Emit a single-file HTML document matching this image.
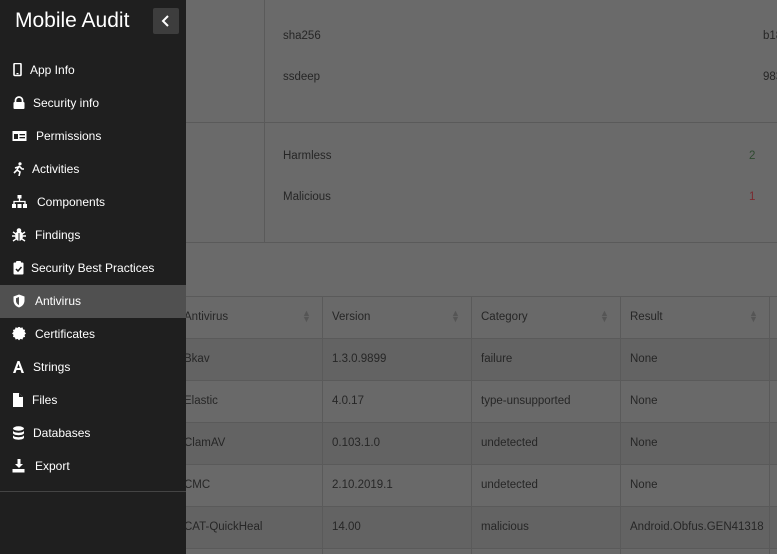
<!DOCTYPE html>
<html><head><style>
*{margin:0;padding:0;box-sizing:border-box}
body{width:777px;height:554px;overflow:hidden;background:#6a6a6a;font-family:"Liberation Sans",sans-serif;position:relative}
.abs{position:absolute}
.side{left:0;top:0;width:186px;height:554px;background:#1f1f1f}
.title{left:15px;top:9px;font-size:21px;color:#fff;font-weight:400}
.btn{left:153px;top:8px;width:26px;height:26px;background:#3d3d3d;border-radius:2px}
.mi{position:absolute;left:0;width:186px;height:33px;color:#fff;font-size:12px;line-height:33px}
.mi svg{position:absolute;left:12px;top:9px;display:block}
.mi span{position:absolute}
.act{background:#505050}
.t{color:#262626;font-size:11.5px;position:absolute}
.hl{position:absolute;height:1px;background:#5a5a5a}
.vl{position:absolute;width:1px;background:#5a5a5a}
</style></head><body>
<div class="vl" style="left:264px;top:0;height:242px"></div>
<div class="hl" style="left:186px;top:122px;width:591px"></div>
<div class="hl" style="left:186px;top:242px;width:591px"></div>
<div class="t" style="left:283px;top:30px">sha256</div>
<div class="t" style="left:763px;top:30px">b18af</div>
<div class="t" style="left:283px;top:71px">ssdeep</div>
<div class="t" style="left:763px;top:71px">98304</div>
<div class="t" style="left:283px;top:150px">Harmless</div>
<div class="t" style="left:749px;top:150px;color:#2f4a30">2</div>
<div class="t" style="left:283px;top:191px">Malicious</div>
<div class="t" style="left:749px;top:191px;color:#7a2a30">1</div>

<div class="abs" style="left:186px;top:297px;width:591px;height:41px;background:#696969"></div>
<div class="abs" style="left:186px;top:338px;width:591px;height:42px;background:#636363"></div>
<div class="abs" style="left:186px;top:380px;width:591px;height:42px;background:#696969"></div>
<div class="abs" style="left:186px;top:422px;width:591px;height:42px;background:#636363"></div>
<div class="abs" style="left:186px;top:464px;width:591px;height:42px;background:#696969"></div>
<div class="abs" style="left:186px;top:506px;width:591px;height:42px;background:#636363"></div>
<div class="abs" style="left:186px;top:548px;width:591px;height:6px;background:#696969"></div>
<div class="hl" style="left:186px;top:296px;width:591px"></div>
<div class="hl" style="left:186px;top:338px;width:591px"></div>
<div class="hl" style="left:186px;top:380px;width:591px"></div>
<div class="hl" style="left:186px;top:422px;width:591px"></div>
<div class="hl" style="left:186px;top:464px;width:591px"></div>
<div class="hl" style="left:186px;top:506px;width:591px"></div>
<div class="hl" style="left:186px;top:548px;width:591px"></div>
<div class="vl" style="left:322px;top:296px;height:258px"></div>
<div class="vl" style="left:471px;top:296px;height:258px"></div>
<div class="vl" style="left:620px;top:296px;height:258px"></div>
<div class="vl" style="left:769px;top:296px;height:258px"></div>
<div class="t" style="left:184px;top:311px">Antivirus</div>
<div class="t" style="left:332px;top:311px">Version</div>
<div class="t" style="left:481px;top:311px">Category</div>
<div class="t" style="left:630px;top:311px">Result</div>
<div class="t" style="left:302px;top:310px;color:#555;font-size:9px;line-height:6px">▲<br>▼</div>
<div class="t" style="left:451px;top:310px;color:#555;font-size:9px;line-height:6px">▲<br>▼</div>
<div class="t" style="left:600px;top:310px;color:#555;font-size:9px;line-height:6px">▲<br>▼</div>
<div class="t" style="left:749px;top:310px;color:#555;font-size:9px;line-height:6px">▲<br>▼</div>
<div class="t" style="left:184px;top:353px">Bkav</div><div class="t" style="left:332px;top:353px">1.3.0.9899</div><div class="t" style="left:481px;top:353px">failure</div><div class="t" style="left:630px;top:353px">None</div>
<div class="t" style="left:184px;top:395px">Elastic</div><div class="t" style="left:332px;top:395px">4.0.17</div><div class="t" style="left:481px;top:395px">type-unsupported</div><div class="t" style="left:630px;top:395px">None</div>
<div class="t" style="left:184px;top:437px">ClamAV</div><div class="t" style="left:332px;top:437px">0.103.1.0</div><div class="t" style="left:481px;top:437px">undetected</div><div class="t" style="left:630px;top:437px">None</div>
<div class="t" style="left:184px;top:479px">CMC</div><div class="t" style="left:332px;top:479px">2.10.2019.1</div><div class="t" style="left:481px;top:479px">undetected</div><div class="t" style="left:630px;top:479px">None</div>
<div class="t" style="left:184px;top:521px">CAT-QuickHeal</div><div class="t" style="left:332px;top:521px">14.00</div><div class="t" style="left:481px;top:521px">malicious</div><div class="t" style="left:630px;top:521px">Android.Obfus.GEN41318</div>

<div class="abs side">
<div class="abs title">Mobile Audit</div>
<div class="abs btn"><svg width="26" height="26"><path d="M15 8l-5 5 5 5" stroke="#fff" stroke-width="2" fill="none"/></svg></div>
<div class="mi" style="top:54px"><svg width="12" height="14"><rect x="2" y="0.5" width="7" height="12" rx="1" stroke="#fff" stroke-width="1.6" fill="none"/><rect x="4.5" y="10" width="2" height="1.2" fill="#fff"/></svg><span style="left:30px">App Info</span></div>
<div class="mi" style="top:87px"><svg width="14" height="14"><path d="M3.5 6V4.5a3.5 3.5 0 017 0V6" stroke="#fff" stroke-width="1.7" fill="none"/><rect x="1.5" y="6" width="11" height="7" rx="1" fill="#fff"/></svg><span style="left:33px">Security info</span></div>
<div class="mi" style="top:120px"><svg width="16" height="14"><rect x="0.5" y="2" width="14" height="10" fill="#fff"/><rect x="2" y="5" width="4" height="5" fill="#1f1f1f"/><rect x="7.5" y="5" width="5.5" height="1.3" fill="#1f1f1f"/><rect x="7.5" y="8" width="5.5" height="1.3" fill="#1f1f1f"/></svg><span style="left:36px">Permissions</span></div>
<div class="mi" style="top:153px"><svg width="14" height="14"><circle cx="8" cy="1.8" r="1.6" fill="#fff"/><path d="M7 4l-2 4 3 2-1 4M7 4l3 3 2 0M6 5L3 6M5 8l-3 3" stroke="#fff" stroke-width="1.6" fill="none"/></svg><span style="left:32px">Activities</span></div>
<div class="mi" style="top:186px"><svg width="16" height="14"><rect x="5.5" y="0" width="4" height="3.5" fill="#fff"/><path d="M7.5 3.5v3M2 9V6.5h11V9" stroke="#fff" stroke-width="1.3" fill="none"/><rect x="0" y="9" width="4" height="4" fill="#fff"/><rect x="5.5" y="9" width="4" height="4" fill="#fff"/><rect x="11" y="9" width="4" height="4" fill="#fff"/></svg><span style="left:37px">Components</span></div>
<div class="mi" style="top:219px"><svg width="14" height="14"><ellipse cx="7" cy="8" rx="4" ry="5" fill="#fff"/><circle cx="7" cy="2.5" r="2.3" fill="#fff"/><path d="M1 4l3 2M13 4l-3 2M0 8h3M11 8h3M1 13l3-2M13 13l-3-2" stroke="#fff" stroke-width="1.4"/><path d="M7 5v8" stroke="#1f1f1f" stroke-width="1"/></svg><span style="left:35px">Findings</span></div>
<div class="mi" style="top:252px"><svg width="14" height="14"><rect x="1.5" y="1.5" width="10" height="12" rx="1" fill="#fff"/><rect x="4" y="0" width="5" height="3" rx="1" fill="#fff"/><path d="M4 8l2 2 3.5-4" stroke="#1f1f1f" stroke-width="1.5" fill="none"/></svg><span style="left:31px">Security Best Practices</span></div>
<div class="mi act" style="top:285px"><svg width="14" height="14"><path d="M7 0.5L1.5 2.5v4c0 3.5 2.5 6 5.5 7 3-1 5.5-3.5 5.5-7v-4z" fill="#fff"/><path d="M7 3L4 4.2v2.5c0 2 1.3 3.6 3 4.3z" fill="#505050"/></svg><span style="left:35px">Antivirus</span></div>
<div class="mi" style="top:318px"><svg width="14" height="14"><path d="M7 0l1.6 1.6 2.2-.6.6 2.2 2.2.6-.6 2.2L14.6 7.6 13 9.2l.6 2.2-2.2.6-.6 2.2-2.2-.6L7 15.2 5.4 13.6l-2.2.6-.6-2.2-2.2-.6.6-2.2L-.6 7.6 1 6l-.6-2.2 2.2-.6.6-2.2 2.2.6z" transform="translate(0.6 -0.6) scale(0.92)" fill="#fff"/></svg><span style="left:35px">Certificates</span></div>
<div class="mi" style="top:351px"><svg width="14" height="14"><path d="M1 13L5.5 1h2L12 13H9.5l-1-3h-4l-1 3zM5.2 8h2.6L6.5 4z" fill="#fff"/></svg><span style="left:33px">Strings</span></div>
<div class="mi" style="top:384px"><svg width="12" height="14"><path d="M1 0h6l4 4v10H1z" fill="#fff"/><path d="M7 0v4h4" fill="#1f1f1f"/></svg><span style="left:32px">Files</span></div>
<div class="mi" style="top:417px"><svg width="14" height="14"><ellipse cx="6.5" cy="2.5" rx="5.5" ry="2.2" fill="#fff"/><path d="M1 4.5c0 1.3 2.5 2.2 5.5 2.2s5.5-.9 5.5-2.2v2.5c0 1.3-2.5 2.2-5.5 2.2S1 8.3 1 7zM1 9c0 1.3 2.5 2.2 5.5 2.2S12 10.3 12 9v2.5c0 1.3-2.5 2.2-5.5 2.2S1 12.8 1 11.5z" fill="#fff"/></svg><span style="left:33px">Databases</span></div>
<div class="mi" style="top:450px"><svg width="14" height="14"><path d="M5.5 0h3v5h2.5L7 9 3 5h2.5z" fill="#fff"/><rect x="0.5" y="10" width="12" height="3.5" fill="#fff"/></svg><span style="left:35px">Export</span></div>
<div class="hl" style="left:0;top:491px;width:186px;background:#444"></div>
</div>
</body></html>
